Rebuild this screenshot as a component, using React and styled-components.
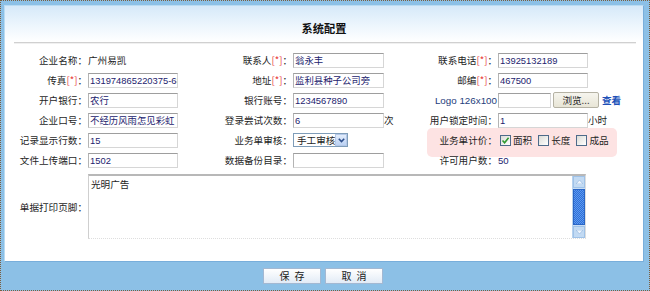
import React from "react";
import styled, { createGlobalStyle } from "styled-components";

const GlobalStyle = createGlobalStyle`
  html, body {
    margin: 0;
    padding: 0;
    background: #ffffff;
  }
  body {
    font-family: "Liberation Sans", "Noto Sans CJK SC", sans-serif;
    font-size: 9.6px;
    color: #1e1e1e;
  }
  * {
    box-sizing: border-box;
  }
`;

const Frame = styled.div`
  width: 650px;
  height: 291px;
  border: 1px dotted #7b5e3e;
  background: #8cc0e6;
  padding: 4px 5px 0 3px;
  display: flex;
  flex-direction: column;
`;

const Panel = styled.div`
  position: relative;
  z-index: 0;
  height: 257px;
  background: #ffffff;
  border: 1px solid #b9dbf3;
  border-right-color: #78aedb;
  border-bottom-color: #78aedb;
  display: flex;
  flex-direction: column;
`;

const Header = styled.div`
  height: 36px;
  padding-top: 15px;
  background: linear-gradient(#d6e9f9 0%, #edf6fd 55%, #ffffff 100%);
  text-align: center;
`;

const Title = styled.h1`
  margin: 0;
  font-family: "Noto Sans CJK SC", sans-serif;
  font-size: 11.2px;
  line-height: 14px;
  font-weight: bold;
  color: #111111;
`;

const Rule = styled.div`
  margin: 0 7px 0 9px;
  border-top: 1px solid #d0d0d0;
  border-bottom: 1px solid #f0f0f0;
`;

const Form = styled.div`
  margin-top: 6px;
  display: grid;
  grid-template-columns: 82px 139px 66px 134px 71px 1fr;
  grid-auto-rows: 20px;
`;

const Label = styled.div`
  display: flex;
  justify-content: flex-end;
  align-items: center;
  white-space: nowrap;
  font-family: "Noto Sans CJK SC", sans-serif;
  color: ${(p) => (p.$link ? "#24407c" : "#1e1e1e")};
  ${(p) => p.$link && `font-family: "Liberation Sans", sans-serif; font-size: 9.8px;`}
`;

const Req = styled.span`
  color: #e83a3a;
`;

const Field = styled.div`
  display: flex;
  align-items: center;
  padding-left: 1px;
  white-space: nowrap;
  font-family: "Noto Sans CJK SC", sans-serif;
`;

const Static = styled.span`
  color: ${(p) => (p.$num ? "#23236e" : "#1e1e1e")};
  font-family: ${(p) =>
    p.$num ? `"Liberation Sans", sans-serif` : `"Noto Sans CJK SC", sans-serif`};
`;

const TextInput = styled.input`
  width: ${(p) => p.$w || 90}px;
  height: 15px;
  margin: 0;
  padding: 0 0 0 1px;
  border: 1px solid #d6d6d6;
  border-top-color: #9e9e9e;
  border-left-color: #b4b4b4;
  background: #ffffff;
  font-family: "Liberation Sans", "Noto Sans CJK SC", sans-serif;
  font-size: 9.4px;
  color: #23236e;
  outline: none;
`;

const Unit = styled.span`
  font-family: "Noto Sans CJK SC", sans-serif;
  color: #1e1e1e;
`;

const Browse = styled.button`
  margin-left: 2px;
  width: 46px;
  height: 16px;
  padding: 0;
  border: 1px solid #b5b2a4;
  border-radius: 2px;
  background: linear-gradient(#f6f5ee, #e8e5d6);
  font-family: "Noto Sans CJK SC", sans-serif;
  font-size: 9.6px;
  color: #1e1e1e;
`;

const ViewLink = styled.a`
  margin-left: 3px;
  color: #2050b8;
  font-weight: bold;
  font-family: "Noto Sans CJK SC", sans-serif;
  text-decoration: none;
`;

const Select = styled.div`
  width: 55px;
  height: 14px;
  border: 1px solid #7f9db9;
  background: #ffffff;
  display: flex;
  align-items: stretch;
`;

const SelectText = styled.span`
  flex: 1;
  padding-left: 3px;
  line-height: 12px;
  font-family: "Noto Sans CJK SC", sans-serif;
  color: #1e1e1e;
`;

const SelectButton = styled.span`
  width: 13px;
  border: 1px solid #b4c8e8;
  background: linear-gradient(#e2ecfb, #bcd2f4);
  display: flex;
  align-items: center;
  justify-content: center;
`;

const Highlight = styled.div`
  grid-column: 5 / 7;
  position: relative;
  display: grid;
  grid-template-columns: 71px 1fr;

  &::before {
    content: "";
    position: absolute;
    top: -2px;
    bottom: -7px;
    left: 1px;
    right: 26px;
    background: #fde3e3;
    border-radius: 5px;
    z-index: -1;
  }
`;

const CheckGroup = styled.div`
  display: flex;
  align-items: center;
  padding-left: 3px;
`;

const CheckItem = styled.label`
  display: flex;
  align-items: center;
  margin-right: 6px;
  font-family: "Noto Sans CJK SC", sans-serif;
  color: #1e1e1e;
`;

const Box = styled.span`
  width: 11px;
  height: 11px;
  margin-right: 2px;
  border: 1px solid #4e6b8a;
  background: linear-gradient(135deg, #dcdcd6, #ffffff);
  display: flex;
  align-items: center;
  justify-content: center;
`;

const NoteLabel = styled(Label)`
  height: 65px;
  margin-top: 4px;
`;

const NoteCell = styled.div`
  grid-column: 2 / 7;
  margin-top: 4px;
  height: 65px;
  padding-left: 1px;
`;

const NoteBox = styled.div`
  width: 498px;
  height: 65px;
  display: flex;
  border: 1px solid #dedede;
  border-top: 2px solid #b8b8b8;
  border-left-color: #cfcfcf;
  border-bottom-style: dotted;
`;

const NoteText = styled.div`
  flex: 1;
  padding: 2px 2px;
  font-family: "Noto Sans CJK SC", sans-serif;
  color: #1e1e1e;
  line-height: 12px;
`;

const Scroll = styled.div`
  width: 13px;
  display: flex;
  flex-direction: column;
  background: #c9def4;
  border-left: 1px solid #b7d2ee;
`;

const ScrollArrow = styled.div`
  height: 12px;
  border: 1px solid #9fc2e8;
  background: #c2daf3;
  display: flex;
  align-items: center;
  justify-content: center;
`;

const ScrollThumb = styled.div`
  flex: 1;
  margin: 1px 0;
  border: 1px solid #2a66c6;
  background: repeating-conic-gradient(#2f6fd8 0 25%, #5e9aee 0 50%) 0 0 / 2px 2px;
`;

const ButtonBar = styled.div`
  flex: 1;
  display: flex;
  justify-content: center;
  align-items: center;
  gap: 4px;
  padding-right: 2px;
`;

const Button = styled.button`
  width: 58px;
  height: 16px;
  padding: 0 0 0 5px;
  border: 1px solid #a3b8d2;
  background: linear-gradient(#ffffff, #e2ebf6);
  font-family: "Noto Sans CJK SC", sans-serif;
  font-size: 10px;
  letter-spacing: 5px;
  color: #1a1a1a;
  line-height: 14px;
`;

const Chevron = () => (
  <svg width="7" height="5" viewBox="0 0 7 5">
    <path d="M0.8 0.8 L3.5 3.6 L6.2 0.8" fill="none" stroke="#2d4f8c" strokeWidth="1.6" />
  </svg>
);

const Tick = () => (
  <svg width="9" height="9" viewBox="0 0 9 9">
    <path d="M1.5 4.5 L3.6 6.8 L7.6 1.8" fill="none" stroke="#2f9a2f" strokeWidth="1.6" />
  </svg>
);

const Arrow = ({ up }) => (
  <svg width="7" height="4" viewBox="0 0 7 4">
    <path d={up ? "M0 4 L3.5 0 L7 4 Z" : "M0 0 L3.5 4 L7 0 Z"} fill="#eef5fd" stroke="#8fb4de" strokeWidth="0.6" />
  </svg>
);

const Check = ({ checked, children }) => (
  <CheckItem>
    <Box>{checked && <Tick />}</Box>
    {children}
  </CheckItem>
);

export default function App() {
  return (
    <>
      <GlobalStyle />
      <Frame>
        <Panel>
          <Header>
            <Title>系统配置</Title>
          </Header>
          <Rule />
          <Form>
            <Label>企业名称：</Label>
            <Field>
              <Static>广州易凯</Static>
            </Field>
            <Label>
              联系人<Req>[*]</Req>：
            </Label>
            <Field>
              <TextInput $w={91} defaultValue="翁永丰" />
            </Field>
            <Label>
              联系电话<Req>[*]</Req>：
            </Label>
            <Field>
              <TextInput defaultValue="13925132189" />
            </Field>

            <Label>
              传真<Req>[*]</Req>：
            </Label>
            <Field>
              <TextInput defaultValue="131974865220375-68" />
            </Field>
            <Label>
              地址<Req>[*]</Req>：
            </Label>
            <Field>
              <TextInput $w={91} defaultValue="监利县种子公司旁" />
            </Field>
            <Label>
              邮编<Req>[*]</Req>：
            </Label>
            <Field>
              <TextInput defaultValue="467500" />
            </Field>

            <Label>开户银行：</Label>
            <Field>
              <TextInput defaultValue="农行" />
            </Field>
            <Label>银行账号：</Label>
            <Field>
              <TextInput $w={91} defaultValue="1234567890" />
            </Field>
            <Label $link>Logo 126x100</Label>
            <Field>
              <TextInput $w={53} defaultValue="" />
              <Browse>浏览...</Browse>
              <ViewLink href="#">查看</ViewLink>
            </Field>

            <Label>企业口号：</Label>
            <Field>
              <TextInput defaultValue="不经历风雨怎见彩虹" />
            </Field>
            <Label>登录尝试次数：</Label>
            <Field>
              <TextInput $w={91} defaultValue="6" />
              <Unit>次</Unit>
            </Field>
            <Label>用户锁定时间：</Label>
            <Field>
              <TextInput defaultValue="1" />
              <Unit>小时</Unit>
            </Field>

            <Label>记录显示行数：</Label>
            <Field>
              <TextInput defaultValue="15" />
            </Field>
            <Label>业务单审核：</Label>
            <Field>
              <Select>
                <SelectText>手工审核</SelectText>
                <SelectButton>
                  <Chevron />
                </SelectButton>
              </Select>
            </Field>
            <Highlight>
              <Label>业务单计价：</Label>
              <CheckGroup>
                <Check checked>面积</Check>
                <Check>长度</Check>
                <Check>成品</Check>
              </CheckGroup>
            </Highlight>

            <Label>文件上传端口：</Label>
            <Field>
              <TextInput defaultValue="1502" />
            </Field>
            <Label>数据备份目录：</Label>
            <Field>
              <TextInput $w={91} defaultValue="" />
            </Field>
            <Label>许可用户数：</Label>
            <Field>
              <Static $num>50</Static>
            </Field>

            <NoteLabel>单据打印页脚：</NoteLabel>
            <NoteCell>
              <NoteBox>
                <NoteText>光明广告</NoteText>
                <Scroll>
                  <ScrollArrow>
                    <Arrow up />
                  </ScrollArrow>
                  <ScrollThumb />
                  <ScrollArrow>
                    <Arrow />
                  </ScrollArrow>
                </Scroll>
              </NoteBox>
            </NoteCell>
          </Form>
        </Panel>
        <ButtonBar>
          <Button>保存</Button>
          <Button>取消</Button>
        </ButtonBar>
      </Frame>
    </>
  );
}
